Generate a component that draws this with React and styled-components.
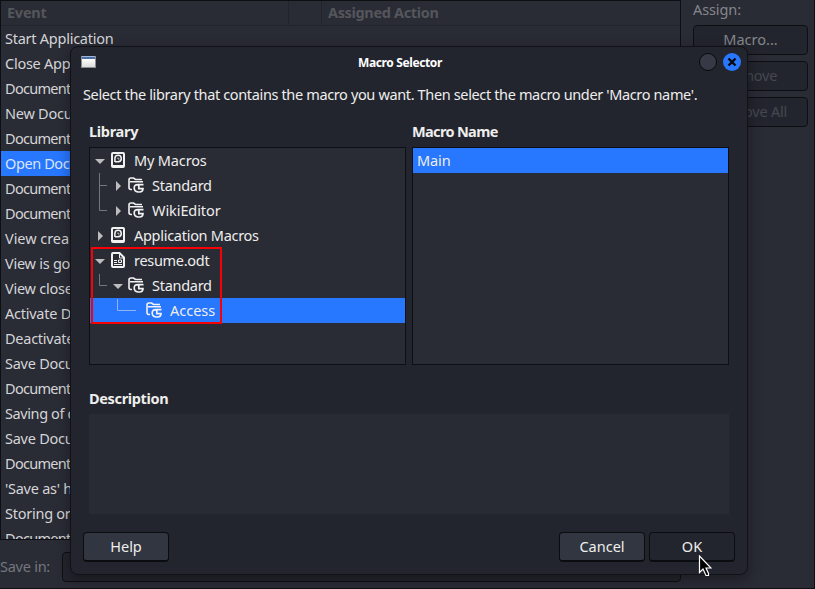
import React from "react";
import styled, { createGlobalStyle, css } from "styled-components";

const Global = createGlobalStyle`
  * { box-sizing: border-box; }
  html, body { margin: 0; overflow: hidden; background: #292b35; }
  body { font: 14.5px/25px "Noto Sans", sans-serif; color: #d5d5d7; }
`;
const Text = styled.span`
  display: inline-block; white-space: pre; line-height: inherit;
  letter-spacing: ${(p) => p.$ls ?? -0.25}px;
`;
const Window = styled.div`
  position: relative; width: 815px; height: 589px; background: #292b35;
  border-right: 1px solid #0e0f13; border-bottom: 1px solid #0e0f13; overflow: hidden;
`;
const Main = styled.div`display: flex; height: 540px;`;
const EventTable = styled.div`
  width: 681px; height: 540px; overflow: hidden; border: 1px solid #0e0f13; background: #292b35;
`;
const Header = styled.div`
  display: grid; grid-template-columns: 288px 33px 1fr; height: 25px;
  border-bottom: 1px solid #22242c; color: #54565b; font-weight: 700;
`;
const HeadCell = styled.div`
  height: 24px; padding-left: 6px; border-right: 1px solid #22242c; line-height: 22px;
  &:last-child { border: 0; }
`;
const EventRow = styled.div`
  height: 25px; padding-left: 4px; white-space: nowrap; overflow: hidden;
  ${(p) => p.$selected && css`background: #2777ff; color: #d9e5fa;`}
`;
const Actions = styled.div`
  width: 127px; padding: 0 0 0 12px; color: #85868b;
  display: flex; flex-direction: column; gap: 6px;
`;
const AssignLabel = styled.div`height: 19px; line-height: 19px;`;
const SideButton = styled.div`
  width: 115px; height: 30px; border: 1px solid #0e0f13; border-radius: 4px;
  background: #23252e; line-height: 27px; text-align: center;
  color: ${(p) => (p.$disabled ? "#454852" : "#85868b")};
`;
const SaveBar = styled.div`display: flex; height: 48px; padding-top: 12px; color: #75777d;`;
const SaveLabel = styled.div`width: 62px; line-height: 29px;`;
const SaveField = styled.div`
  width: 619px; height: 30px; border: 1px solid #0e0f13; border-radius: 4px; background: #23252d;
`;
const Dialog = styled.section`
  position: absolute; left: 70px; top: 46px; width: 678px; height: 529px;
  border: 1px solid #111217; border-radius: 8px; background: #23252e; color: #eeeeec;
  box-shadow: 0 4px 14px rgba(0,0,0,.35);
`;
const TitleBar = styled.header`
  display: grid; grid-template-columns: 62px 1fr 80px; align-items: center; height: 31px;
  font-size: 12px; font-weight: 700; text-align: center; color: #fff; line-height: 30px;
`;
const AppIcon = styled.i`
  width: 15px; height: 12px; margin: 0 0 1px 10px; border: 1px solid #8a8c90; border-top: 0;
  background: linear-gradient(#9db6dc 0 1px, #4a6da5 1px 3px, #fff 3px, #dcdcd8);
`;
const WindowControls = styled.div`
  display: flex; justify-content: flex-end; gap: 6px; padding: 0 6px 1px 0;
`;
const Circle = styled.div`
  display: flex; width: 18px; height: 18px; border-radius: 50%;
  background: ${(p) => (p.$close ? "#2777ff" : "#373a46")};
  border: ${(p) => (p.$close ? "0" : "1px solid #08090c")};
`;
const Body = styled.div`padding: 4px 18px 0;`;
const Intro = styled.p`margin: 0 0 0 -6px; height: 26px; white-space: nowrap;`;
const Columns = styled.div`display: grid; grid-template-columns: 317px 317px; gap: 6px;`;
const Label = styled.div`font-weight: 700; height: 39px; line-height: 47px; white-space: nowrap;`;
const ListBox = styled.div`
  position: relative; height: 218px; border: 1px solid #0e0f13; background: #292b35;
`;
const TreeRow = styled.div`
  display: flex; height: 25px; padding-left: ${(p) => p.$level * 18}px;
  ${(p) => p.$selected && css`background: #2777ff;`}
`;
const Guide = styled.svg`position: absolute; inset: 0; width: 60px; height: 216px; pointer-events: none;`;
const Arrow = styled.svg`width: 20px; height: 25px; flex: none;`;
const Icon = styled.svg`width: 16px; height: 16px; margin: 4px 8px 0 0; flex: none;`;
const MacroRow = styled.div`height: 25px; padding-left: 4px; background: #2777ff;`;
const Highlight = styled.div`
  position: absolute; left: 1px; top: 99px; width: 131px; height: 77px; border: 2px solid #f90006;
`;
const Description = styled.div`padding-top: 10px;`;
const DescriptionBox = styled.div`height: 100px; background: #282a34;`;
const Footer = styled.footer`display: flex; gap: 4px; margin: 18px -6px 0;`;
const Button = styled.button`
  width: 86px; height: 30px; padding: 0; border: 1px solid #0b0c10; border-bottom-width: 2px;
  border-radius: 4px; font: inherit; line-height: 27px; color: #eeeeec;
  background: ${(p) => (p.$active ? "#23252e" : "#323641")};
  &:first-child { margin-right: auto; }
`;
const Cursor = styled.svg`position: absolute; left: 698px; top: 555px; width: 14px; height: 23px;`;

const Expander = ({ open }) => (
  <Arrow viewBox="0 0 20 25">
    {open ? <path d="M5 11h10l-5 5z" fill="#bcbdbf" /> : open === false ? <path d="M8 8v10l5-5z" fill="#bcbdbf" /> : null}
  </Arrow>
);
const icons = {
  container: <>
    <path fill="#f2f2f2" fillRule="evenodd" d="M3 0h10q2 0 2 2v12q0 2-2 2H3q-2 0-2-2V2q0-2 2-2zM3 2v11h10V2z" />
    <path d="M4.900 10V6.500A3.200 3.200 0 1 1 8.100 9.700H5" fill="none" stroke="#f2f2f2" strokeWidth="1.500" />
    <path d="M8 5.500v1.500h1.500" fill="none" stroke="#f2f2f2" strokeWidth=".8" />
  </>,
  folder: <>
    <path d="M4 12.500H3Q1 12.500 1 10.500V3q0-2 2-2h2.500l2 1.500H14M2 4.800h13" fill="none" stroke="#f2f2f2" strokeWidth="1.600" />
    <path d="M15.500 7.600H10Q6.200 7.600 6.200 11T10 15h1.500q3.500 0 3.500-3.400H10.800V8" fill="none" stroke="#f2f2f2" strokeWidth="1.700" />
  </>,
  document: <>
    <path d="M2 2q0-1 1-1h6.500L14 5.500V14q0 1-1 1H3q-1 0-1-1z" fill="none" stroke="#f2f2f2" strokeWidth="2" />
    <path d="M9.500 1v5h5M4 8.500h3M4 10.500h3M4 12.500h8M8.500 8h3v2.500h-3z" fill="none" stroke="#f2f2f2" />
  </>,
};
const tree = [
  [0, "container", "My Macros", true, false, -0.15],
  [1, "folder", "Standard", false, false, -0.28],
  [1, "folder", "WikiEditor", false, false, -0.08],
  [0, "container", "Application Macros", false, false, -0.28],
  [0, "document", "resume.odt", true, false, -0.3],
  [1, "folder", "Standard", true, false, -0.28],
  [2, "folder", "Access", null, true, 0],
];
const events = [
  "Start Application", "Close App", "Document", "New Docu", "Document", "Open Docu", "Document",
  "Document", "View crea", "View is go", "View close", "Activate D", "Deactivate", "Save Docu",
  "Document", "Saving of d", "Save Docu", "Document", "'Save as' h", "Storing or", "Document",
];
const eventSpacing = { Document: -0.7, "Open Docu": -0.4, "New Docu": -0.25, "View crea": -0.05, "Saving of d": -0.4 };

export default function App() {
  return <>
    <Global />
    <Window>
      <Main>
        <EventTable>
          <Header>
            <HeadCell><Text>Event</Text></HeadCell><HeadCell />
            <HeadCell><Text $ls={-0.35}>Assigned Action</Text></HeadCell>
          </Header>
          {events.map((name, i) => (
            <EventRow key={i} $selected={i === 5}><Text $ls={eventSpacing[name]}>{name}</Text></EventRow>
          ))}
        </EventTable>
        <Actions>
          <AssignLabel><Text $ls={-0.1}>Assign:</Text></AssignLabel>
          <SideButton><Text $ls={0}>Macro...</Text></SideButton>
          <SideButton $disabled><Text>Remove</Text></SideButton>
          <SideButton $disabled><Text>Remove All</Text></SideButton>
        </Actions>
      </Main>
      <SaveBar><SaveLabel><Text>Save in:</Text></SaveLabel><SaveField /></SaveBar>
      <Dialog>
        <TitleBar>
          <AppIcon /><Text $ls={-0.38}>Macro Selector</Text>
          <WindowControls>
            <Circle />
            <Circle $close><svg width="18" height="18"><path d="M5.500 5.500l7 7m0-7l-7 7" stroke="#08090c" strokeWidth="2.400" /></svg></Circle>
          </WindowControls>
        </TitleBar>
        <Body>
          <Intro><Text $ls={-0.36}>Select the library that contains the macro you want. Then select the macro under 'Macro name'.</Text></Intro>
          <Columns>
            <div>
              <Label><Text $ls={-0.3}>Library</Text></Label>
              <ListBox>
                {tree.map(([level, icon, name, open, selected, spacing], i) => (
                  <TreeRow key={i} $level={level} $selected={selected}>
                    <Expander open={open} /><Icon viewBox="0 0 16 16">{icons[icon]}</Icon><Text $ls={spacing}>{name}</Text>
                  </TreeRow>
                ))}
                <Guide>
                  <path d="M9.500 25v37.500H17M9.500 37.500H17M9.500 126v11.500H17" fill="none" stroke="#74767d" />
                  <path d="M27.500 151v11.500H46" fill="none" stroke="#8fb4f5" />
                </Guide>
                <Highlight />
              </ListBox>
            </div>
            <div>
              <Label><Text $ls={-0.65}>Macro Name</Text></Label>
              <ListBox><MacroRow><Text $ls={-0.1}>Main</Text></MacroRow></ListBox>
            </div>
          </Columns>
          <Description><Label><Text $ls={-0.35}>Description</Text></Label><DescriptionBox /></Description>
          <Footer>
            <Button><Text $ls={0}>Help</Text></Button>
            <Button><Text $ls={0}>Cancel</Text></Button>
            <Button $active><Text $ls={0}>OK</Text></Button>
          </Footer>
        </Body>
      </Dialog>
      <Cursor viewBox="0 0 14 23">
        <path d="M1.500 1v16.500l3.500-3.500 3 6.500h2.500v-2L8 13h5z" fill="#000" stroke="#fff" strokeWidth="1.200" />
      </Cursor>
    </Window>
  </>;
}
